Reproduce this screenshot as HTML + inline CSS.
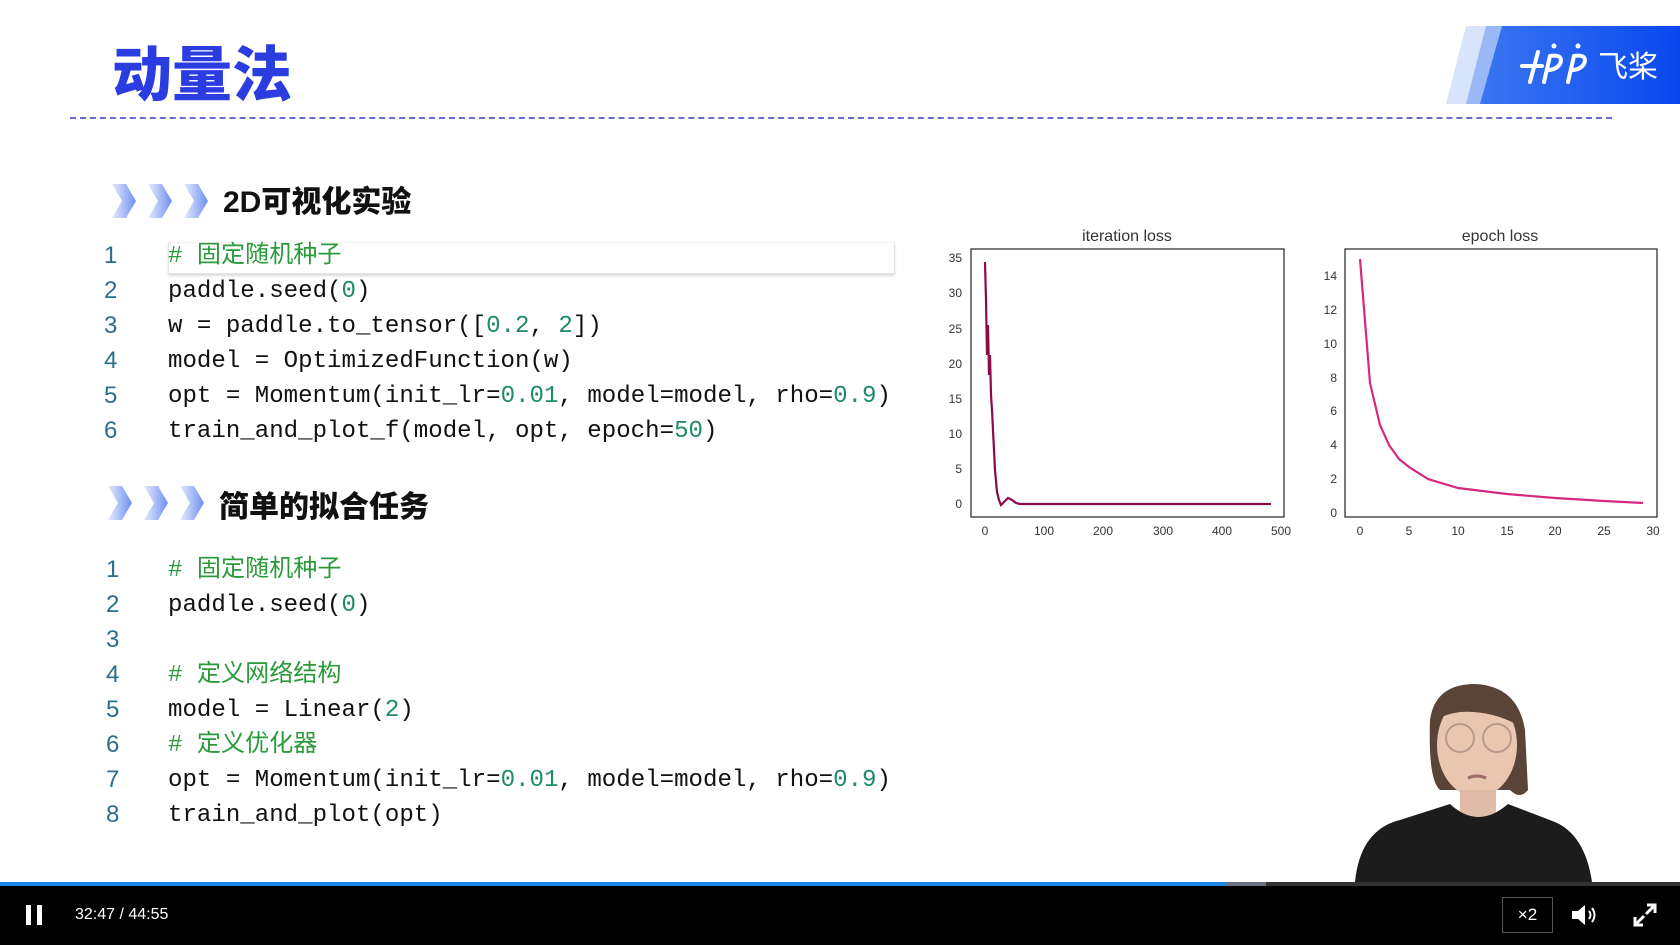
<!DOCTYPE html>
<html><head><meta charset="utf-8"><style>
*{margin:0;padding:0;box-sizing:border-box}
body{width:1680px;height:945px;background:#fff;position:relative;overflow:hidden;font-family:"Liberation Sans","Noto Sans CJK SC",sans-serif}
.abs{position:absolute}
.title{left:112px;top:27px;font-size:60px;font-weight:900;color:#2b3ce0;letter-spacing:0px;font-family:"Noto Sans CJK SC",sans-serif}
.dash{left:70px;top:117px;width:1542px;border-top:2px dashed #6a6ad0}
.h{font-size:30px;font-weight:900;color:#111;font-family:"Liberation Sans","Noto Sans CJK SC",sans-serif}
.code{font-family:"Liberation Mono","Noto Sans CJK SC",monospace;font-size:24.1px;color:#111;white-space:pre;line-height:35px}
.ln{color:#2c6e8e;font-family:"Liberation Sans",sans-serif;font-size:24px;line-height:35px}
.g{color:#1e8a6a}.c{color:#2a9a3a}
</style></head><body>
<div class="abs title">动量法</div>
<div class="abs dash"></div>
<svg class="abs" style="left:1446px;top:26px" width="234" height="78">
<polygon points="20,0 234,0 234,78 0,78" fill="#d8e4fb"/>
<polygon points="40,0 234,0 234,78 20,78" fill="#9ab8f6"/>
<defs><linearGradient id="lg" x1="0" x2="1"><stop offset="0" stop-color="#3a76f0"/><stop offset="1" stop-color="#0a48ee"/></linearGradient></defs>
<polygon points="56,0 234,0 234,78 34,78" fill="url(#lg)"/>
<g stroke="#fff" stroke-width="4" fill="none" stroke-linecap="round">
<path d="M76,40 H96 M92,26 L84,56"/>
<path d="M104,30 L98,56 M104,30 Q118,28 114,38 Q110,44 102,44"/>
<path d="M128,30 L122,56 M128,30 Q142,28 138,38 Q134,44 126,44"/>
</g>
<circle cx="108" cy="20" r="2.5" fill="#fff"/><circle cx="132" cy="20" r="2.5" fill="#fff"/>
<text x="152" y="51" fill="#fff" font-size="30" font-family="Noto Sans CJK SC,sans-serif">飞桨</text>
</svg>

<svg class="abs" style="left:108px;top:180px" width="105" height="42">
<defs><linearGradient id="ch" x1="0" x2="1"><stop offset="0" stop-color="#e6ecfc"/><stop offset="1" stop-color="#6d8ff0"/></linearGradient></defs>
<polygon points="4,4 18,4 28,21 18,38 4,38 14,21" fill="url(#ch)"/>
<polygon points="40,4 54,4 64,21 54,38 40,38 50,21" fill="url(#ch)"/>
<polygon points="76,4 90,4 100,21 90,38 76,38 86,21" fill="url(#ch)"/>
</svg>
<div class="abs h" style="left:223px;top:177px">2D可视化实验</div>

<div class="abs" style="left:168px;top:242px;width:727px;height:32px;border:1px solid #e6e6e6;border-top-color:#f2f2f2;box-shadow:0 2px 2px #ddd"></div>
<div class="abs ln" style="left:104px;top:238px">1<br>2<br>3<br>4<br>5<br>6</div>
<div class="abs code" style="left:168px;top:239px"><span class="c"># 固定随机种子</span>
paddle.seed(<span class="g">0</span>)
w = paddle.to_tensor([<span class="g">0.2</span>, <span class="g">2</span>])
model = OptimizedFunction(w)
opt = Momentum(init_lr=<span class="g">0.01</span>, model=model, rho=<span class="g">0.9</span>)
train_and_plot_f(model, opt, epoch=<span class="g">50</span>)</div>

<svg class="abs" style="left:104px;top:482px" width="105" height="42">
<polygon points="4,4 18,4 28,21 18,38 4,38 14,21" fill="url(#ch)"/>
<polygon points="40,4 54,4 64,21 54,38 40,38 50,21" fill="url(#ch)"/>
<polygon points="76,4 90,4 100,21 90,38 76,38 86,21" fill="url(#ch)"/>
</svg>
<div class="abs h" style="left:219px;top:482px">简单的拟合任务</div>

<div class="abs ln" style="left:106px;top:552px">1<br>2<br>3<br>4<br>5<br>6<br>7<br>8</div>
<div class="abs code" style="left:168px;top:553px"><span class="c"># 固定随机种子</span>
paddle.seed(<span class="g">0</span>)

<span class="c"># 定义网络结构</span>
model = Linear(<span class="g">2</span>)
<span class="c"># 定义优化器</span>
opt = Momentum(init_lr=<span class="g">0.01</span>, model=model, rho=<span class="g">0.9</span>)
train_and_plot(opt)</div>

<svg class="abs" style="left:0;top:0" width="1680" height="882" font-family="Liberation Sans,sans-serif" font-size="12" fill="#333">
<text x="1127" y="241" font-size="16" text-anchor="middle">iteration loss</text>
<rect x="971" y="249" width="313" height="268" fill="none" stroke="#333" stroke-width="1.3"/>
<g text-anchor="end">
<text x="962" y="508">0</text><text x="962" y="473">5</text><text x="962" y="438">10</text><text x="962" y="403">15</text><text x="962" y="368">20</text><text x="962" y="333">25</text><text x="962" y="297">30</text><text x="962" y="262">35</text></g>
<g text-anchor="middle">
<text x="985" y="535">0</text><text x="1044" y="535">100</text><text x="1103" y="535">200</text><text x="1163" y="535">300</text><text x="1222" y="535">400</text><text x="1281" y="535">500</text></g>
<path d="M985,262 L986,300 987,355 988,325 989,375 990,355 991,395 992,410 993,430 995,470 997,492 999,500 1001,505 1004,502 1008,498 1012,500 1016,503 1020,504 1271,504" fill="none" stroke="#8a0a4a" stroke-width="2.2"/>
<text x="1500" y="241" font-size="16" text-anchor="middle">epoch loss</text>
<rect x="1345" y="249" width="312" height="268" fill="none" stroke="#333" stroke-width="1.3"/>
<g text-anchor="end">
<text x="1337" y="517">0</text><text x="1337" y="483">2</text><text x="1337" y="449">4</text><text x="1337" y="415">6</text><text x="1337" y="382">8</text><text x="1337" y="348">10</text><text x="1337" y="314">12</text><text x="1337" y="280">14</text></g>
<g text-anchor="middle">
<text x="1360" y="535">0</text><text x="1409" y="535">5</text><text x="1458" y="535">10</text><text x="1507" y="535">15</text><text x="1555" y="535">20</text><text x="1604" y="535">25</text><text x="1653" y="535">30</text></g>
<path d="M1360,259 L1370,383 1380,425 1389,445 1399,459 1409,467 1428,479 1458,488 1507,494 1555,498 1604,501 1643,503" fill="none" stroke="#d6287e" stroke-width="2.2"/>
</svg>

<svg class="abs" style="left:1340px;top:680px" width="280" height="202">
<path d="M90,40 Q95,4 135,4 Q178,6 185,50 L188,110 Q180,120 170,110 L100,110 Q88,100 90,40Z" fill="#5a4438"/>
<ellipse cx="137" cy="65" rx="40" ry="52" fill="#e8c6b0"/>
<path d="M97,40 Q110,10 140,12 Q172,14 178,45 Q150,30 120,32 Q105,34 97,40Z" fill="#5a4438"/>
<circle cx="120" cy="58" r="14" fill="none" stroke="#b89a8c" stroke-width="2"/>
<circle cx="157" cy="58" r="14" fill="none" stroke="#b89a8c" stroke-width="2"/>
<path d="M128,98 Q137,94 146,98" stroke="#a06a6a" stroke-width="3" fill="none"/>
<rect x="120" y="110" width="36" height="35" fill="#e0bca6"/>
<path d="M15,202 Q20,150 60,140 L110,124 Q138,150 168,124 L215,142 Q245,155 252,202Z" fill="#1c1c1c"/>
</svg>

<div class="abs" style="left:0;top:882px;width:1680px;height:63px;background:#000"></div>
<div class="abs" style="left:0;top:882px;width:1225px;height:4px;background:#1a87e6"></div>
<div class="abs" style="left:1225px;top:882px;width:41px;height:4px;background:#6b7080"></div>
<div class="abs" style="left:1266px;top:882px;width:414px;height:4px;background:#333"></div>
<div class="abs" style="left:26px;top:905px;width:5px;height:20px;background:#fff"></div>
<div class="abs" style="left:37px;top:905px;width:5px;height:20px;background:#fff"></div>
<div class="abs" style="left:75px;top:906px;color:#fff;font-size:16px">32:47 / 44:55</div>
<div class="abs" style="left:1502px;top:897px;width:51px;height:36px;border:1px solid #555;color:#fff;font-size:17px;text-align:center;line-height:34px">×2</div>
<svg class="abs" style="left:1570px;top:903px" width="30" height="24"><path d="M2,8 H8 L15,2 V22 L8,16 H2Z" fill="#fff"/><path d="M19,8 Q22,12 19,16 M22,5 Q27,12 22,19" stroke="#fff" stroke-width="2" fill="none"/></svg>
<svg class="abs" style="left:1633px;top:903px" width="24" height="24"><path d="M14,2 H22 V10 M22,2 L13,11 M10,22 H2 V14 M2,22 L11,13" stroke="#fff" stroke-width="3" fill="none"/></svg>
</body></html>
